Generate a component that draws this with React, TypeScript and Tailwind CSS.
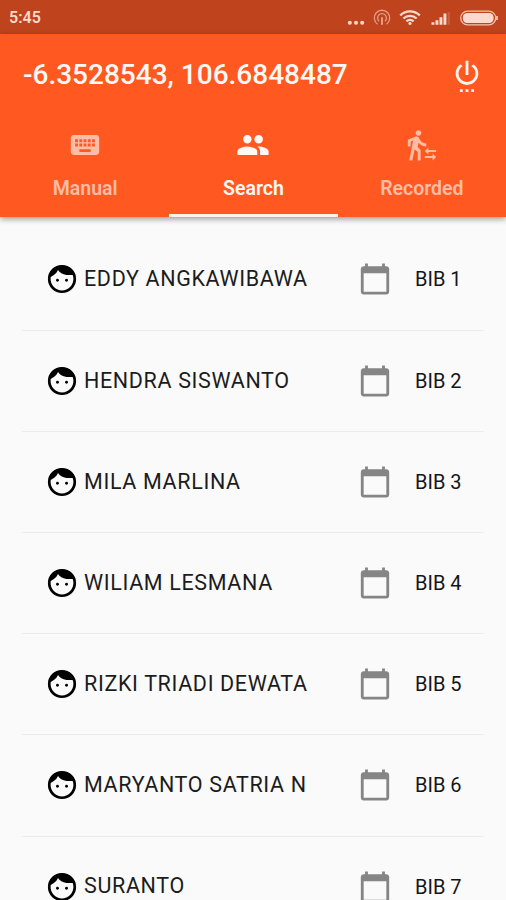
import type { ReactNode } from 'react';
import {
  MdCalendarToday,
  MdKeyboard,
  MdPeople,
  MdSettingsPower,
  MdTransferWithinAStation,
} from 'react-icons/md';

interface Participant {
  name: string;
  bib: number;
}

const participants: Participant[] = [
  { name: 'EDDY ANGKAWIBAWA', bib: 1 },
  { name: 'HENDRA SISWANTO', bib: 2 },
  { name: 'MILA MARLINA', bib: 3 },
  { name: 'WILIAM LESMANA', bib: 4 },
  { name: 'RIZKI TRIADI DEWATA', bib: 5 },
  { name: 'MARYANTO SATRIA N', bib: 6 },
  { name: 'SURANTO', bib: 7 },
];

function FaceIcon() {
  return (
    <svg width="34" height="34" viewBox="0 0 24 24" className="shrink-0 text-black" fill="currentColor" aria-hidden="true">
      <circle cx="12" cy="12" r="9" fill="none" stroke="currentColor" strokeWidth="1.9" />
      <path d="M2.6 11C5.4 10.3 8 8.4 9.2 5.7c1 1.9 3.2 3.2 6 3.4h5.9C20 5.1 16.3 2.5 12 2.5c-5.2 0-9.3 3.9-9.4 8.5z" />
      <circle cx="8.8" cy="12.9" r="1" />
      <circle cx="15.2" cy="12.9" r="1" />
    </svg>
  );
}

function StatusBar() {
  return (
    <div className="flex h-[34px] shrink-0 items-center justify-between bg-[#bf431c] pl-[9px] pr-[7px] pt-[2px] text-[#fbd9cc]">
      <span className="text-[16px] font-semibold">5:45</span>
      <svg width="152" height="20" viewBox="0 0 152 20" fill="currentColor" aria-hidden="true">
        {/* notification overflow */}
        <circle cx="2.8" cy="14.7" r="2" />
        <circle cx="9" cy="14.7" r="2" />
        <circle cx="15.2" cy="14.7" r="2" />

        {/* hotspot */}
        <g fill="none" stroke="currentColor" strokeWidth="1.3" opacity="0.6">
          <path d="M30.5 16.2a7.7 7.7 0 1 1 9 0" />
          <path d="M32 13.2a4.4 4.4 0 1 1 6 0" />
          <path d="M35 9.2v7.6" strokeWidth="2" />
        </g>

        {/* wifi */}
        <g fill="none" stroke="currentColor" strokeWidth="2.3">
          <path d="M53.2 7.3a14.2 14.2 0 0 1 19.6 0" />
          <path d="M56.4 10.5a9.6 9.6 0 0 1 13.2 0" />
          <path d="M59.4 13.4a5.3 5.3 0 0 1 7.2 0" />
        </g>
        <circle cx="63" cy="15.4" r="1.6" />

        {/* signal */}
        <path d="M84.5 14.2h2.9v2.6h-2.9zM88.5 12.3h2.9v4.5h-2.9zM92.5 9.2h2.9v7.6h-2.9zM96.5 5.6h2.9v11.2h-2.9z" />
        <path d="M100.6 4.2h2.2v12.6h-2.2z" opacity="0.2" />

        {/* battery */}
        <rect x="113.7" y="3.1" width="35" height="13.8" rx="6.9" fill="none" stroke="currentColor" strokeWidth="1.3" opacity="0.85" />
        <rect x="115.8" y="5" width="30.8" height="10" rx="4.4" />
        <path d="M150 8v4" stroke="currentColor" strokeWidth="1.5" />
      </svg>
    </div>
  );
}

interface TabProps {
  label: string;
  icon: ReactNode;
  active?: boolean;
}

function Tab({ label, icon, active = false }: TabProps) {
  return (
    <button
      type="button"
      role="tab"
      aria-selected={active}
      className={`flex flex-1 flex-col items-center border-b-[3px] pt-[13px] ${
        active ? 'border-[#fdf1ec] text-[#fff8f5]' : 'border-transparent text-[#ffbda6]'
      }`}
    >
      {icon}
      <span className="mt-[13px] text-[19.5px] font-semibold leading-7">{label}</span>
    </button>
  );
}

function ParticipantRow({ name, bib }: Participant) {
  return (
    <li className="mx-[22px] flex h-[101.2px] items-center border-b border-[#ececec] pl-[23px] pr-[1px]">
      <FaceIcon />
      <span className="ml-[5px] flex-1 whitespace-nowrap text-[21.5px] tracking-[0.65px] text-[#1c1c1c]">{name}</span>
      <MdCalendarToday size={34} className="shrink-0 text-[#858585]" />
      <span className="ml-[23px] w-[68px] whitespace-nowrap text-[20px] text-[#151515]">BIB {bib}</span>
    </li>
  );
}

export default function App() {
  return (
    <div className="flex h-[900px] w-full flex-col overflow-hidden bg-[#fafafa] font-[Roboto,sans-serif]">
      <StatusBar />
      <header className="z-10 shrink-0 bg-[#ff5921] shadow-[0_2px_6px_rgba(0,0,0,0.4)]">
        <div className="flex h-[81px] items-center justify-between pl-[23px] pr-[22px]">
          <h1 className="text-[28px] font-medium text-[#fff8f5]">-6.3528543, 106.6848487</h1>
          <MdSettingsPower size={34} className="text-[#fff3ee]" />
        </div>
        <div role="tablist" className="flex h-[102px] pl-[1px]">
          <Tab label="Manual" icon={<MdKeyboard size={34} />} />
          <Tab label="Search" icon={<MdPeople size={34} />} active />
          <Tab label="Recorded" icon={<MdTransferWithinAStation size={34} />} />
        </div>
      </header>
      <ul className="shrink-0 pt-[12.4px]">
        {participants.map((participant) => (
          <ParticipantRow key={participant.bib} {...participant} />
        ))}
      </ul>
    </div>
  );
}
